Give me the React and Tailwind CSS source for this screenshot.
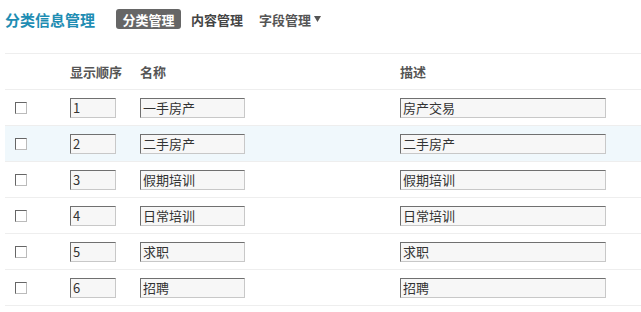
import React from 'react';

const rows = [
  { order: '1', name: '一手房产', desc: '房产交易' },
  { order: '2', name: '二手房产', desc: '二手房产' },
  { order: '3', name: '假期培训', desc: '假期培训' },
  { order: '4', name: '日常培训', desc: '日常培训' },
  { order: '5', name: '求职', desc: '求职' },
  { order: '6', name: '招聘', desc: '招聘' },
];

const font = { fontFamily: '"Noto Sans CJK SC", "Noto Sans", sans-serif' };

function Checkbox() {
  return (
    <span className="block w-[12px] h-[12px] bg-white border border-t-[#666] border-l-[#666] border-r-[#bbb] border-b-[#bbb]" />
  );
}

function Field({ value, width }) {
  return (
    <div
      className={`${width} h-[20px] flex items-center pl-[2px] bg-[#f7f7f7] border border-t-[#707070] border-l-[#707070] border-r-[#c8c8c8] border-b-[#c8c8c8] text-[13px] text-[#333] leading-none`}
    >
      {value}
    </div>
  );
}

export default function App() {
  return (
    <div className="w-[641px] h-[312px] bg-white overflow-hidden" style={font}>
      {/* top nav */}
      <div className="h-[38px] flex items-center pl-[5px]">
        <h1 className="text-[15px] font-bold text-[#1e8db3] leading-none">分类信息管理</h1>
        <span className="ml-[21px] w-[65px] h-[20px] flex items-center justify-center rounded-[3px] bg-[#666] text-white text-[13px] font-bold leading-none">
          分类管理
        </span>
        <span className="ml-[10px] text-[13px] font-bold text-[#444] leading-none">内容管理</span>
        <span className="ml-[16px] flex items-center gap-[3px] text-[13px] font-bold text-[#555] leading-none">
          字段管理
          <svg width="7" height="6" viewBox="0 0 7 6">
            <polygon points="0,0 7,0 3.5,6" fill="#555" />
          </svg>
        </span>
      </div>

      {/* table */}
      <div className="mt-[15px] ml-[5px] border-t border-[#eee]">
        <div className="grid grid-cols-[65px_70px_260px_1fr] h-[36px] items-center border-b border-[#eee] text-[13px] font-bold text-[#555]">
          <div />
          <div>显示顺序</div>
          <div>名称</div>
          <div>描述</div>
        </div>
        {rows.map((row, i) => (
          <div
            key={row.order}
            className={`grid grid-cols-[65px_70px_260px_1fr] h-[36px] items-center border-b border-[#eee] ${
              i === 1 ? 'bg-[#f0f8fc]' : ''
            }`}
          >
            <div className="pl-[10px]">
              <Checkbox />
            </div>
            <div>
              <Field value={row.order} width="w-[46px]" />
            </div>
            <div>
              <Field value={row.name} width="w-[105px]" />
            </div>
            <div>
              <Field value={row.desc} width="w-[206px]" />
            </div>
          </div>
        ))}
      </div>
    </div>
  );
}
